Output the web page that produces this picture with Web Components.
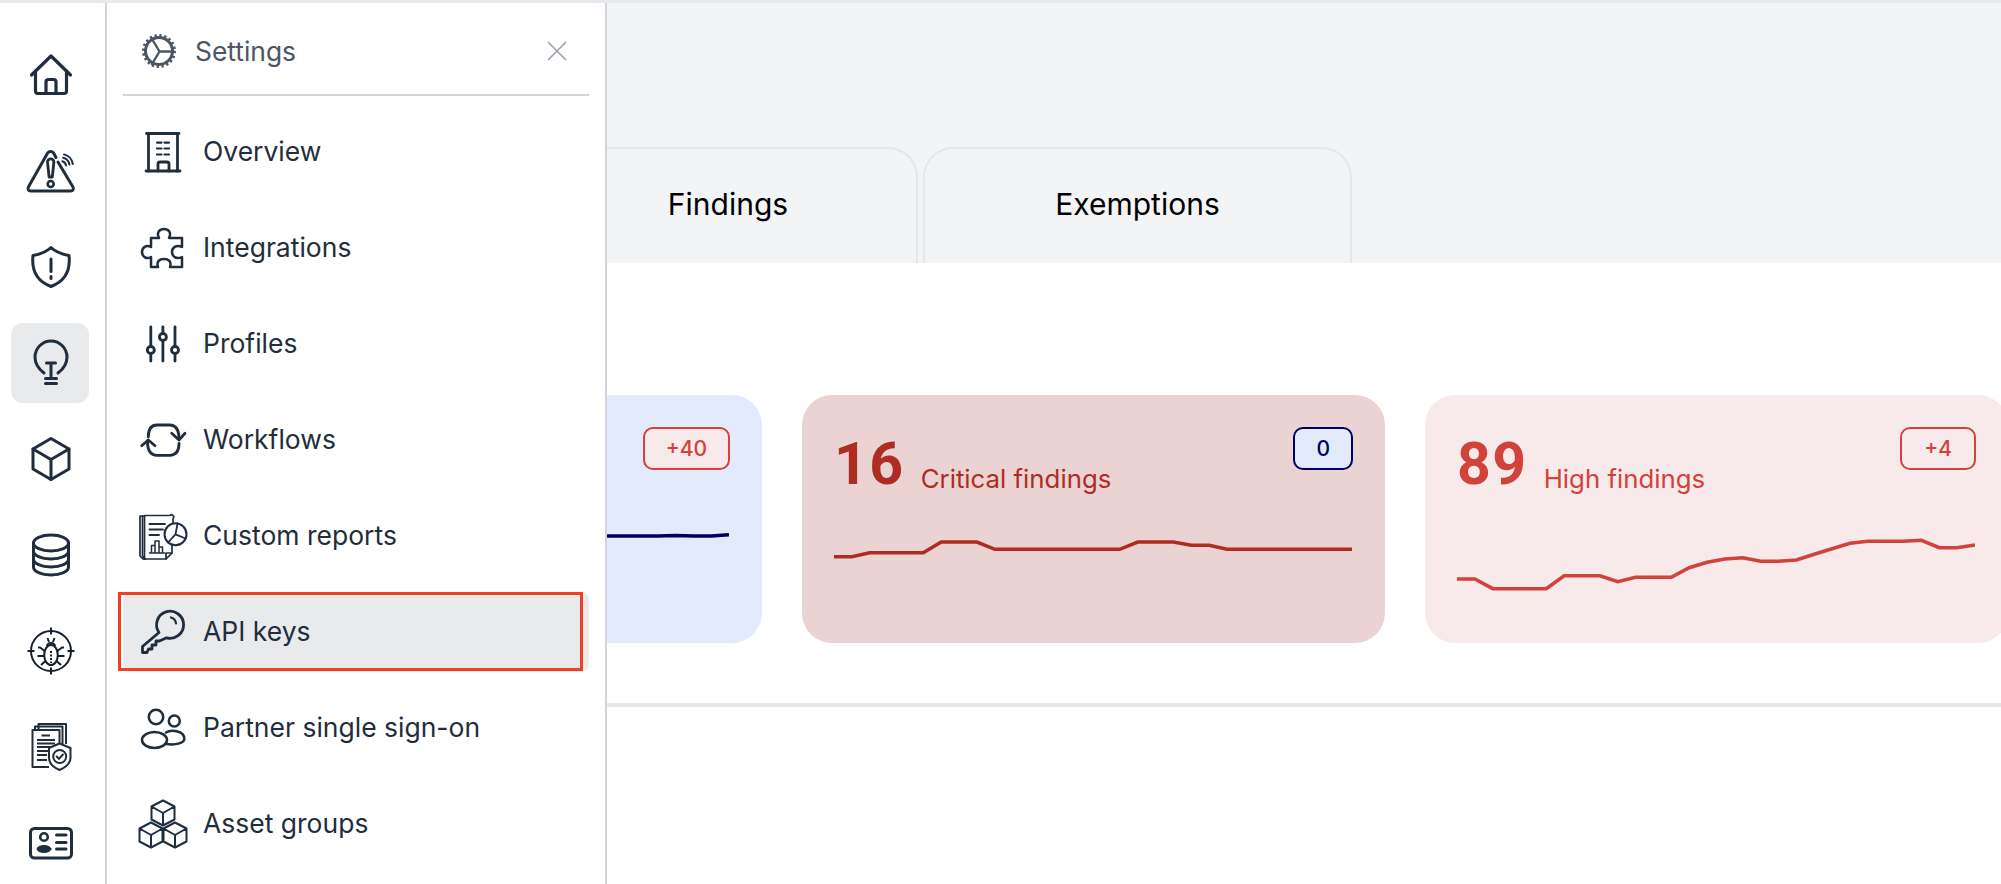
<!doctype html>
<html>
<head>
<meta charset="utf-8">
<title>Settings</title>
<style>
  html, body { margin: 0; height: 100%; overflow: hidden; background: #fff; }
  body { font-family: Inter, "Noto Sans", sans-serif; color: #1f2d3d; }
</style>
</head>
<body>
<app-shell>
  <nav-rail slot="rail">
    <rail-item icon="home"></rail-item>
    <rail-item icon="alert"></rail-item>
    <rail-item icon="shield"></rail-item>
    <rail-item icon="bulb" active></rail-item>
    <rail-item icon="cube"></rail-item>
    <rail-item icon="database"></rail-item>
    <rail-item icon="bug"></rail-item>
    <rail-item icon="compliance"></rail-item>
    <rail-item icon="idcard"></rail-item>
  </nav-rail>
  <main-view slot="main">
    <tab-button slot="tabs" style="width: 380px">Findings</tab-button>
    <tab-button slot="tabs">Exemptions</tab-button>
    <stat-card slot="cards" kind="info" delta="+40" delta-kind="up"
      points="16,16,16,16,16,16,16,16,16,16,16,16,16,16,16,16,16,16,16,16,16,16,16,16,16,16,15.5,16,16,14.7"></stat-card>
    <stat-card slot="cards" kind="critical" count="16" label="Critical findings" delta="0" delta-kind="flat"
      points="36.7,36.7,32.7,32.7,32.7,32.7,22,22,22,29.3,29.3,29.3,29.3,29.3,29.3,29.3,29.3,22,22,22,25.3,25.3,29.3,29.3,29.3,29.3,29.3,29.3,29.3,29.3"></stat-card>
    <stat-card slot="cards" kind="high" count="89" label="High findings" delta="+4" delta-kind="plain"
      points="59,59,68.7,68.7,68.7,68.7,55.7,55.7,55.7,61.7,57.3,57.3,57.3,47.7,42.3,39,37.7,41.3,41.3,40,34.3,28.7,23.3,21.3,21.3,21.3,20.3,27.7,27.7,25"></stat-card>
  </main-view>
  <settings-drawer slot="overlay">
    <nav-row icon="building">Overview</nav-row>
    <nav-row icon="puzzle">Integrations</nav-row>
    <nav-row icon="sliders">Profiles</nav-row>
    <nav-row icon="sync">Workflows</nav-row>
    <nav-row icon="reports">Custom reports</nav-row>
    <nav-row icon="key" active marked>API keys</nav-row>
    <nav-row icon="users">Partner single sign-on</nav-row>
    <nav-row icon="cubes">Asset groups</nav-row>
  </settings-drawer>
</app-shell>

<script>
const cubeAt = (x, y) => `<g transform="translate(${x} ${y})"><path d="M0 6 L11.5 0 L23 6 V19 L11.5 25 L0 19Z M0 6 L11.5 12.5 L23 6 M11.5 12.5 V25"/></g>`;

// all icons live in a 48x48 box, centred on the spot they occupy in the layout
const ICONS = {
  home: `<g stroke-width="3.2" transform="translate(0 -1.5)"><path d="M4.5 25.5 L24 6.5 L43.5 25.5"/><path d="M8.5 21.5 V41.5 a2.5 2.5 0 0 0 2.5 2.5 H37 a2.5 2.5 0 0 0 2.5-2.5 V21.5"/><path d="M19 44 V32.5 a2.5 2.5 0 0 1 2.5-2.5 h5 a2.5 2.5 0 0 1 2.5 2.5 V44"/></g>`,
  alert: `<g stroke-width="3"><path d="M31 15 L46 40 a2.6 2.6 0 0 1 -2.2 4 H3.6 a2.6 2.6 0 0 1 -2.2-4 L20.6 6 a3.6 3.6 0 0 1 6 0 L29 10.5"/><path d="M20.5 15 a3.2 3.2 0 0 1 6.4 0 L25.3 30 h-3.2 Z" stroke-width="2.8"/><circle cx="23.7" cy="37" r="3" stroke-width="2.6"/></g><g stroke-width="2"><path d="M35.3 14.2 A5 5 0 0 1 39 18.5"/><path d="M36.2 10.8 A8.5 8.5 0 0 1 42.4 17.5"/><path d="M37 7.4 A12 12 0 0 1 45.8 17"/></g>`,
  shield: `<g stroke-width="3"><path d="M24 4.5 C19 9 13 11.5 6 12.5 C4.5 26 8 37.5 24 43.5 C40 37.5 43.5 26 42 12.5 C35 11.5 29 9 24 4.5Z"/><path d="M24 16 V28.5"/><path d="M24 33.5 V35.5"/></g>`,
  bulb: `<g stroke-width="3"><path d="M17 34 C13 31 8 26 8 18 A16 16 0 0 1 40 18 C40 26 35 31 31 34"/><path d="M19.5 24 H28.5 M24 24 V37"/><path d="M18.5 39.5 H29.5 M18.5 44.5 H29.5"/></g>`,
  cube: `<g stroke-width="3"><path d="M24 3.5 L42 14 V34 L24 44.5 L6 34 V14Z"/><path d="M6 14 L24 24.5 L42 14 M24 24.5 V44.5"/></g>`,
  database: `<g stroke-width="3"><ellipse cx="24" cy="12" rx="17.5" ry="8"/><path d="M6.5 12 V36 C6.5 40.5 14 44 24 44 S41.5 40.5 41.5 36 V12"/><path d="M6.5 20 C6.5 24.5 14 28 24 28 S41.5 24.5 41.5 20"/><path d="M6.5 28 C6.5 32.5 14 36 24 36 S41.5 32.5 41.5 28"/></g>`,
  bug: `<g stroke="#16202c" stroke-width="2" stroke-linecap="butt"><circle cx="24" cy="24" r="20"/><path d="M24 0.5 V7.5 M24 40.5 V47.5 M0.5 24 H7.5 M40.5 24 H47.5"/><ellipse cx="24" cy="28" rx="6.8" ry="10"/><path d="M19.8 19 a4.5 4.5 0 0 1 8.4 0"/><path d="M20.5 11 l1.5 4 M27.5 11 l-1.5 4"/><path d="M17.8 24 L13 20.5 H11 M30.2 24 L35 20.5 H37 M17 29 H10.5 M31 29 H37.5 M18.5 34 L14 38 M29.5 34 L34 38"/><path d="M24 24 V36" stroke-dasharray="2 1.5"/></g>`,
  compliance: `<g stroke-width="2"><path d="M11.5 6 V1 H39 V21" stroke-linecap="butt"/><path d="M8 6 V3.5 H35.5 V21" stroke-linecap="butt"/><path d="M22 44 H5.5 V7 H32.5 V21" stroke-linecap="butt"/><path d="M14.5 12.5 H23 M10 17 H28 M10 20.5 H28 M10 24 H28 M10 28 H24 M10 32 H20 M10 37 H20" stroke-width="2.2" stroke-linecap="butt"/><path d="M32.5 20.5 L43.5 25 V35 C43.5 41 37 45 32.5 47 C28 45 22 41 22 35 V25Z" fill="#fff"/><circle cx="32.7" cy="33.5" r="6.5"/><path d="M29.7 33.5 l2.2 2.4 l4-4.4"/></g>`,
  idcard: `<g stroke-width="3"><rect x="3.5" y="9.5" width="41" height="29.5" rx="4"/><path d="M29.5 16 H39 M29.5 23.5 H39 M29.5 30 H39"/></g><circle cx="17" cy="18" r="3.8" stroke-width="2.6"/><ellipse cx="17" cy="30" rx="7" ry="3.5" fill="currentColor" stroke-width="1"/>`,
  gear: `<circle cx="24" cy="24" r="13.5" stroke-width="3"/><circle cx="24" cy="24" r="15.3" stroke-width="3.4" stroke-dasharray="2.2 2.6" stroke-linecap="butt"/><path d="M24.5 24.5 H38.5 M24.5 24.5 L17 12 M24.5 24.5 L17 37" stroke-width="2.4"/>`,
  building: `<g stroke-width="2.8"><path d="M7.5 5.5 H40 M7 43 H41"/><path d="M9.5 5.5 V43 M38.5 5.5 V43"/><path d="M19 43 V36 a2 2 0 0 1 2-2 h7 a2 2 0 0 1 2 2 V43"/></g><path d="M18 14.6 H22.5 M25.5 14.6 H30 M18 20.5 H22.5 M25.5 20.5 H30 M18 26.5 H22.5 M25.5 26.5 H30" stroke-width="2.2"/>`,
  puzzle: `<path stroke-width="2.5" d="M12 14 H20 c-3-6 1-9 5-9 s8 3 5 9 H43 V23 c-6-3-10 1-10 5 s4 8 10 5 V43 H31 c2-6-2-8-6-8 s-8 2-6 8 H12 V33 c-5 3-9-1-9-5 s4-8 9-5 Z"/>`,
  sliders: `<g stroke-width="2.8"><path d="M11.8 7 V26.5 M11.8 33.5 V41 M23.9 7 V13.5 M23.9 20.5 V41 M36 7 V26.5 M36 33.5 V41"/><circle cx="11.8" cy="30" r="3.5"/><circle cx="23.9" cy="17" r="3.5"/><circle cx="36" cy="30" r="3.5"/></g>`,
  sync: `<g stroke-width="2.8"><path d="M9.3 21 C9.3 13 12 9 18 9 H30.5 C37 9 40 14 40 23"/><path d="M32.7 17.3 L40 24 L46 17.3"/><path d="M40 27.5 C40 35 37 39.3 30.5 39.3 H18 C12 39.3 8.5 35 8.5 25"/><path d="M2.7 29.7 L9.3 24 L16 29.7"/></g>`,
  reports: `<g stroke-width="1.7"><path d="M3 4 H1 V44 L4 47 H6"/><path d="M5.5 4 H3.5 V44 L6 47"/><path d="M5.5 47 V3.5 H31 a2 2 0 0 1 3 3 V11"/><path d="M33 33 V41 L27 47 H5.5"/><path d="M27 47 V41 H33"/><path d="M10.5 12 H26 M10.5 17.5 H24 M10.5 23 H20" stroke-width="1.9"/><path d="M12.5 41 V33.5 h3.5 V41 M16 41 V29 h4 V41 M20 41 V35 h3.5 V41 M10.5 41 H25.5" stroke-width="1.5"/><circle cx="36.5" cy="22.3" r="11" fill="#fff" stroke-width="2"/><path d="M36.5 22.3 L38.5 11.5 M36.5 22.3 L46.5 26.5 M36.5 22.3 L29 30.5" stroke-width="1.8"/></g>`,
  key: `<g stroke-width="2.8"><path d="M20 24.5 A13.5 13.5 0 1 1 27.5 29.8 L20.5 33 H17 V37 H13 V41 H9.5 L8 44.5 H3.5 V38.5 Z"/><path d="M32 9.5 a7 7 0 0 1 5 6" stroke-width="2.2"/></g>`,
  users: `<g stroke-width="2.5"><circle cx="17" cy="13" r="7.2"/><circle cx="35.3" cy="17" r="5.5"/><ellipse cx="15.5" cy="36" rx="12.5" ry="8"/><path d="M27 28.5 C31 25.5 45.5 26 45.3 35 C45.3 38.5 38 41.5 27 40"/></g>`,
  cubes: `<g stroke-width="2">${cubeAt(12.5, 0.5)}${cubeAt(0.5, 22.5)}${cubeAt(24.5, 22.5)}</g>`,
  close: `<path d="M15.5 15.5 L32.5 32.5 M32.5 15.5 L15.5 32.5" stroke-width="1.7"/>`
};

class AppIcon extends HTMLElement {
  static get observedAttributes() { return ["name"]; }
  constructor() {
    super();
    this.attachShadow({ mode: "open" });
  }
  connectedCallback() { this.render(); }
  attributeChangedCallback() { this.render(); }
  render() {
    this.shadowRoot.innerHTML = `
      <style>
        :host { display: block; width: 48px; height: 48px; flex: none; }
        svg { display: block; overflow: visible; fill: none; stroke: currentColor; stroke-linecap: round; stroke-linejoin: round; }
      </style>
      <svg width="48" height="48" viewBox="0 0 48 48">${ICONS[this.getAttribute("name")] || ""}</svg>`;
  }
}
customElements.define("app-icon", AppIcon);

class AppShell extends HTMLElement {
  constructor() {
    super();
    this.attachShadow({ mode: "open" }).innerHTML = `
      <style>
        :host { display: flex; flex-direction: column; height: 884px; width: 2001px; overflow: hidden; position: relative; }
        .strip { flex: none; height: 3px; background: #e8e8ee; }
        .body { flex: 1; display: flex; min-height: 0; position: relative; }
        .main { flex: 1; min-width: 0; display: block; overflow: hidden; }
        .overlay { position: absolute; left: 107px; top: 0; bottom: 0; width: 500px; }
      </style>
      <div class="strip"></div>
      <div class="body">
        <slot name="rail"></slot>
        <div class="main"><slot name="main"></slot></div>
        <div class="overlay"><slot name="overlay"></slot></div>
      </div>`;
  }
}
customElements.define("app-shell", AppShell);

class NavRail extends HTMLElement {
  constructor() {
    super();
    this.attachShadow({ mode: "open" }).innerHTML = `
      <style>
        :host { display: flex; flex-direction: column; gap: 16px; flex: none; box-sizing: border-box; width: 107px; height: 100%;
                padding: 32px 0 0 11px; border-right: 2px solid #d1d5db; background: #fff; overflow: hidden; }
      </style>
      <slot></slot>`;
  }
}
customElements.define("nav-rail", NavRail);

class RailItem extends HTMLElement {
  constructor() {
    super();
    this.attachShadow({ mode: "open" }).innerHTML = `
      <style>
        :host { display: flex; align-items: center; justify-content: center; flex: none; box-sizing: border-box; width: 78px; height: 80px;
                padding-left: 2px; border-radius: 12px; color: #1f2d3d; }
        :host([active]) { background: #e8eaec; }
      </style>
      <app-icon></app-icon>`;
  }
  connectedCallback() {
    this.shadowRoot.querySelector("app-icon").setAttribute("name", this.getAttribute("icon"));
  }
}
customElements.define("rail-item", RailItem);

class SettingsDrawer extends HTMLElement {
  constructor() {
    super();
    this.attachShadow({ mode: "open" }).innerHTML = `
      <style>
        :host { display: block; box-sizing: border-box; height: 100%; background: #fff; border-right: 2px solid #d1d5db; padding: 0 16px; overflow: hidden; }
        header { display: flex; align-items: center; height: 86px; padding: 5px 0 0 12px; border-bottom: 2px solid #d1d5db;
                 font-size: 26.4px; color: #4b5563; }
        header span { margin-left: 12px; flex: 1; }
        .close { color: #9ca3af; margin-right: 8px; }
        .list { display: flex; flex-direction: column; gap: 16px; padding-top: 16px; }
      </style>
      <header>
        <app-icon name="gear"></app-icon>
        <span>Settings</span>
        <app-icon class="close" name="close"></app-icon>
      </header>
      <div class="list"><slot></slot></div>`;
  }
}
customElements.define("settings-drawer", SettingsDrawer);

class NavRow extends HTMLElement {
  constructor() {
    super();
    this.attachShadow({ mode: "open" }).innerHTML = `
      <style>
        :host { display: flex; align-items: center; gap: 16px; position: relative; flex: none; box-sizing: border-box; height: 80px; padding-left: 16px;
                border-radius: 8px; font-size: 26.5px; color: #1f2d3d; }
        :host([active]) { background: #e8eaec; }
        .text { padding-bottom: 2px; }
        /* red highlight drawn over the row in the screenshot */
        .mark { display: none; position: absolute; left: -5px; top: 0; width: 465px; height: 79px; box-sizing: border-box; border: 3px solid #ee4023; }
        :host([marked]) .mark { display: block; }
      </style>
      <app-icon></app-icon><span class="text"><slot></slot></span><div class="mark"></div>`;
  }
  connectedCallback() {
    this.shadowRoot.querySelector("app-icon").setAttribute("name", this.getAttribute("icon"));
  }
}
customElements.define("nav-row", NavRow);

class MainView extends HTMLElement {
  constructor() {
    super();
    this.attachShadow({ mode: "open" }).innerHTML = `
      <style>
        :host { display: block; }
        .top { display: flex; align-items: flex-end; gap: 5px; height: 260px; box-sizing: border-box; padding-left: 431px; background: #f3f4f6; }
        .stats { display: flex; gap: 40px; padding: 132px 0 0 72px; }
        .rule { height: 4px; margin-top: 60px; background: #e8e8e8; }
      </style>
      <div class="top"><slot name="tabs"></slot></div>
      <div class="stats"><slot name="cards"></slot></div>
      <div class="rule"></div>`;
  }
}
customElements.define("main-view", MainView);

class TabButton extends HTMLElement {
  constructor() {
    super();
    this.attachShadow({ mode: "open" }).innerHTML = `
      <style>
        :host { display: flex; align-items: center; justify-content: center; flex: none; box-sizing: border-box; width: 429px; height: 116px;
                padding-bottom: 5px; border: 2px solid #e5e7eb; border-bottom-width: 0; border-radius: 30px 30px 0 0; font-size: 30px; color: #000; }
      </style>
      <slot></slot>`;
  }
}
customElements.define("tab-button", TabButton);

class SparkLine extends HTMLElement {
  connectedCallback() {
    const ys = this.getAttribute("points").split(",").map(Number);
    const pts = ys.map((y, i) => `${(i * 518 / 29).toFixed(1)},${y}`).join(" ");
    this.attachShadow({ mode: "open" }).innerHTML = `
      <style>:host { display: block; width: 518px; height: 80px; } svg { display: block; }</style>
      <svg width="518" height="80" viewBox="0 0 518 80"><polyline points="${pts}" fill="none" stroke="currentColor" stroke-width="3.6"/></svg>`;
  }
}
customElements.define("spark-line", SparkLine);

class StatCard extends HTMLElement {
  connectedCallback() {
    const count = this.getAttribute("count");
    const label = this.getAttribute("label");
    this.attachShadow({ mode: "open" }).innerHTML = `
      <style>
        :host { display: block; flex: none; box-sizing: border-box; width: 583px; height: 248px; padding: 32px; border-radius: 30px; }
        :host([kind="info"]) { background: #e3eafb; color: #000066; }
        :host([kind="critical"]) { background: #ebd3d4; color: #ae2d23; }
        :host([kind="high"]) { background: #f8eaea; color: #d1423a; }
        .head { display: flex; align-items: flex-start; height: 43px; margin-bottom: 50px; }
        .count { font: 700 59px/1 Roboto, sans-serif; letter-spacing: 1.5px; margin-top: 7px; }
        .label { font-size: 25.8px; line-height: 32px; margin: 36px 0 0 16px; white-space: nowrap; }
        .delta { margin-left: auto; box-sizing: border-box; height: 43px; padding: 0 21px; border: 2px solid; border-radius: 10px;
                 font-size: 21px; font-weight: 500; line-height: 39px; }
        .delta.up { color: #d1423a; background: #f8eaea; }
        .delta.flat { color: #000066; background: #e3eafb; }
        .delta.plain { color: #d1423a; background: transparent; padding: 0 22px; }
      </style>
      <div class="head">
        ${count ? `<span class="count">${count}</span>` : ""}
        ${label ? `<span class="label">${label}</span>` : ""}
        <span class="delta ${this.getAttribute("delta-kind")}">${this.getAttribute("delta")}</span>
      </div>
      <spark-line points="${this.getAttribute("points")}"></spark-line>`;
  }
}
customElements.define("stat-card", StatCard);
</script>
</body>
</html>
